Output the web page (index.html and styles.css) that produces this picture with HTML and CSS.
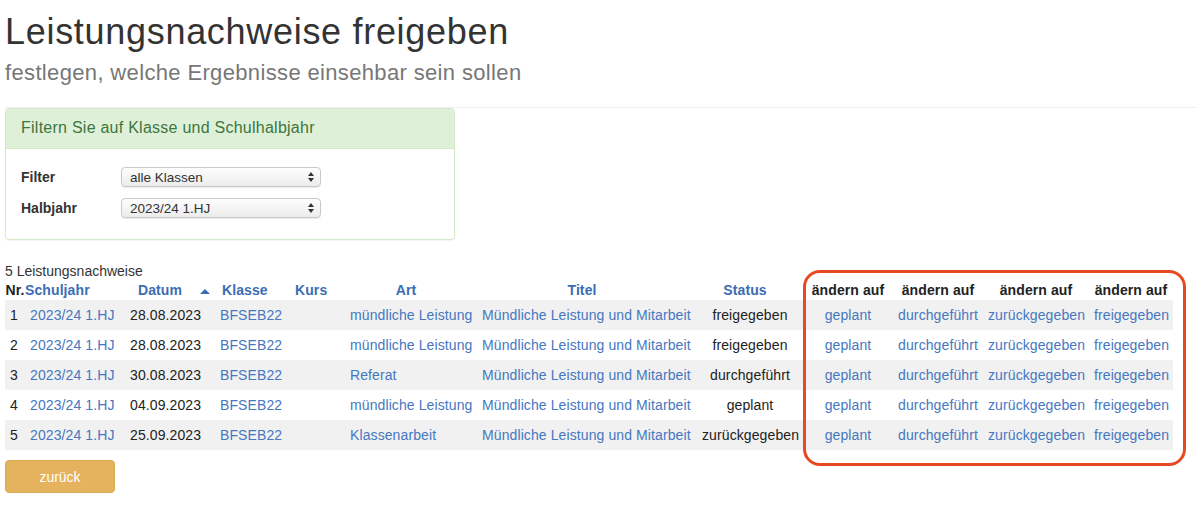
FILE: index.html
```html
<!DOCTYPE html>
<html lang="de">
<head>
    <meta charset="UTF-8">
    <title>Leistungsnachweise freigeben</title>
    <link rel="stylesheet" href="styles.css">
</head>
<body>
    <div class="page">
        <h1>Leistungsnachweise freigeben</h1>
        <p class="subtitle">festlegen, welche Ergebnisse einsehbar sein sollen</p>
        <hr>

        <div class="panel">
            <div class="panel-heading">Filtern Sie auf Klasse und Schulhalbjahr</div>
            <div class="panel-body">
                <div class="form-row">
                    <label for="filter">Filter</label>
                    <span class="select-wrap">
                        <select id="filter"><option>alle Klassen</option></select>
                        <svg class="select-arrows" width="6" height="10" viewBox="0 0 6 10"><path d="M3 0 L6 4 L0 4 Z M3 10 L6 6 L0 6 Z" fill="#333"/></svg>
                    </span>
                </div>
                <div class="form-row">
                    <label for="halbjahr">Halbjahr</label>
                    <span class="select-wrap">
                        <select id="halbjahr"><option>2023/24 1.HJ</option></select>
                        <svg class="select-arrows" width="6" height="10" viewBox="0 0 6 10"><path d="M3 0 L6 4 L0 4 Z M3 10 L6 6 L0 6 Z" fill="#333"/></svg>
                    </span>
                </div>
            </div>
        </div>

        <div class="result">
            <div class="count">5 Leistungsnachweise</div>
            <table class="list">
                <colgroup>
                    <col style="width:20px"><col style="width:100px"><col style="width:90px"><col style="width:75px">
                    <col style="width:55px"><col style="width:132px"><col style="width:220px"><col style="width:106px">
                    <col style="width:90px"><col style="width:90px"><col style="width:106px"><col style="width:84px">
                </colgroup>
                <thead>
                    <tr>
                        <th class="nr">Nr.</th>
                        <th class="left"><a href="#">Schuljahr</a></th>
                        <th class="datum"><a href="#">Datum</a><span class="sort"></span></th>
                        <th class="left klasse"><a href="#">Klasse</a></th>
                        <th class="left kurs"><a href="#">Kurs</a></th>
                        <th class="shift"><a href="#">Art</a></th>
                        <th class="shift"><a href="#">Titel</a></th>
                        <th class="shift"><a href="#">Status</a></th>
                        <th>ändern auf</th>
                        <th>ändern auf</th>
                        <th>ändern auf</th>
                        <th>ändern auf</th>
                    </tr>
                </thead>
                <tbody>
                    <tr>
                        <td>1</td><td><a href="#">2023/24 1.HJ</a></td><td>28.08.2023</td><td><a href="#">BFSEB22</a></td><td></td>
                        <td><a href="#">mündliche Leistung</a></td><td><a href="#">Mündliche Leistung und Mitarbeit</a></td>
                        <td class="center">freigegeben</td>
                        <td class="center"><a href="#">geplant</a></td><td class="center"><a href="#">durchgeführt</a></td>
                        <td class="center"><a href="#">zurückgegeben</a></td><td class="center"><a href="#">freigegeben</a></td>
                    </tr>
                    <tr>
                        <td>2</td><td><a href="#">2023/24 1.HJ</a></td><td>28.08.2023</td><td><a href="#">BFSEB22</a></td><td></td>
                        <td><a href="#">mündliche Leistung</a></td><td><a href="#">Mündliche Leistung und Mitarbeit</a></td>
                        <td class="center">freigegeben</td>
                        <td class="center"><a href="#">geplant</a></td><td class="center"><a href="#">durchgeführt</a></td>
                        <td class="center"><a href="#">zurückgegeben</a></td><td class="center"><a href="#">freigegeben</a></td>
                    </tr>
                    <tr>
                        <td>3</td><td><a href="#">2023/24 1.HJ</a></td><td>30.08.2023</td><td><a href="#">BFSEB22</a></td><td></td>
                        <td><a href="#">Referat</a></td><td><a href="#">Mündliche Leistung und Mitarbeit</a></td>
                        <td class="center">durchgeführt</td>
                        <td class="center"><a href="#">geplant</a></td><td class="center"><a href="#">durchgeführt</a></td>
                        <td class="center"><a href="#">zurückgegeben</a></td><td class="center"><a href="#">freigegeben</a></td>
                    </tr>
                    <tr>
                        <td>4</td><td><a href="#">2023/24 1.HJ</a></td><td>04.09.2023</td><td><a href="#">BFSEB22</a></td><td></td>
                        <td><a href="#">mündliche Leistung</a></td><td><a href="#">Mündliche Leistung und Mitarbeit</a></td>
                        <td class="center">geplant</td>
                        <td class="center"><a href="#">geplant</a></td><td class="center"><a href="#">durchgeführt</a></td>
                        <td class="center"><a href="#">zurückgegeben</a></td><td class="center"><a href="#">freigegeben</a></td>
                    </tr>
                    <tr>
                        <td>5</td><td><a href="#">2023/24 1.HJ</a></td><td>25.09.2023</td><td><a href="#">BFSEB22</a></td><td></td>
                        <td><a href="#">Klassenarbeit</a></td><td><a href="#">Mündliche Leistung und Mitarbeit</a></td>
                        <td class="center">zurückgegeben</td>
                        <td class="center"><a href="#">geplant</a></td><td class="center"><a href="#">durchgeführt</a></td>
                        <td class="center"><a href="#">zurückgegeben</a></td><td class="center"><a href="#">freigegeben</a></td>
                    </tr>
                </tbody>
            </table>
            <!-- Markierung der Aenderungsspalten -->
            <div class="highlight"></div>
        </div>

        <button class="back-button">zurück</button>
    </div>
</body>
</html>
```

FILE: styles.css
```css
body {
    margin: 0;
    font-family: "Liberation Sans", Arial, sans-serif;
    color: #333;
    background: #fff;
}
a {
    color: #4677bf;
    text-decoration: none;
}
.page {
    padding: 0 0 0 5px;
}
h1 {
    margin: 11px 0 0;
    font-size: 36px;
    line-height: 41px;
    font-weight: normal;
    letter-spacing: 0.7px;
    color: #333;
}
.subtitle {
    margin: 10px 0 0;
    font-size: 22px;
    line-height: 22px;
    letter-spacing: 0.35px;
    color: #777;
}
hr {
    margin: 23px 0 0;
    border: none;
    border-top: 1px solid #eee;
}
.panel {
    width: 448px;
    border: 1px solid #d6e9c6;
    border-radius: 4px;
    box-shadow: 0 1px 1px rgba(0,0,0,0.05);
}
.panel-heading {
    padding: 9px 15px 10px;
    font-size: 16px;
    line-height: 20px;
    letter-spacing: 0.25px;
    color: #3c763d;
    background-color: #dff0d8;
    border-bottom: 1px solid #d6e9c6;
}
.panel-body {
    padding: 18px 15px 21px;
}
.form-row {
    display: flex;
    align-items: center;
    height: 20px;
}
.form-row + .form-row {
    margin-top: 11px;
}
.form-row label {
    width: 100px;
    font-size: 14px;
    font-weight: bold;
    color: #333;
}
.select-wrap {
    position: relative;
    display: inline-block;
}
.select-wrap select {
    appearance: none;
    -webkit-appearance: none;
    width: 200px;
    height: 20px;
    padding: 0 0 0 8px;
    font-family: "Liberation Sans", Arial, sans-serif;
    font-size: 13.5px;
    color: #333;
    border: 1px solid #c9c9c9;
    border-radius: 4px;
    background: linear-gradient(#fdfdfd, #ececec);
    box-shadow: 0 1px 1px rgba(0,0,0,0.08);
}
.select-arrows {
    position: absolute;
    right: 7px;
    top: 5px;
}
.result {
    position: relative;
    margin-top: 22px;
}
.count {
    font-size: 14px;
    line-height: 18px;
    color: #333;
}
.list {
    border-collapse: collapse;
    table-layout: fixed;
    width: 1168px;
    font-size: 14px;
    letter-spacing: 0.1px;
}
.list th {
    height: 20px;
    padding: 0;
    line-height: 20px;
    font-weight: bold;
    text-align: center;
    white-space: nowrap;
    color: #222;
}
.list th a {
    color: #3b6db4;
}
.list th.left {
    text-align: left;
}
.list th.klasse {
    padding-left: 7px;
}
.list th.kurs {
    padding-left: 5px;
}
.list th.datum {
    padding-left: 8px;
}
.list th.shift {
    padding-right: 10px;
}
.sort {
    display: inline-block;
    margin-left: 18px;
    width: 0;
    height: 0;
    border-left: 5px solid transparent;
    border-right: 5px solid transparent;
    border-bottom: 5px solid #3b6db4;
    vertical-align: 1px;
}
.list td {
    height: 30px;
    padding: 0 5px;
    line-height: 30px;
    white-space: nowrap;
    color: #222;
}
.list td.center {
    text-align: center;
}
.list tbody tr:nth-child(odd) {
    background-color: #f1f1f1;
}
.highlight {
    position: absolute;
    left: 798px;
    top: 8px;
    width: 377px;
    height: 190px;
    border: 3px solid #e64a24;
    border-radius: 17px;
    pointer-events: none;
}
.back-button {
    margin-top: 10px;
    width: 110px;
    height: 33px;
    font-family: "Liberation Sans", Arial, sans-serif;
    font-size: 14px;
    color: #fff;
    background-color: #e5b25d;
    border: 1px solid #dcaa55;
    border-radius: 4px;
    cursor: pointer;
}
```
